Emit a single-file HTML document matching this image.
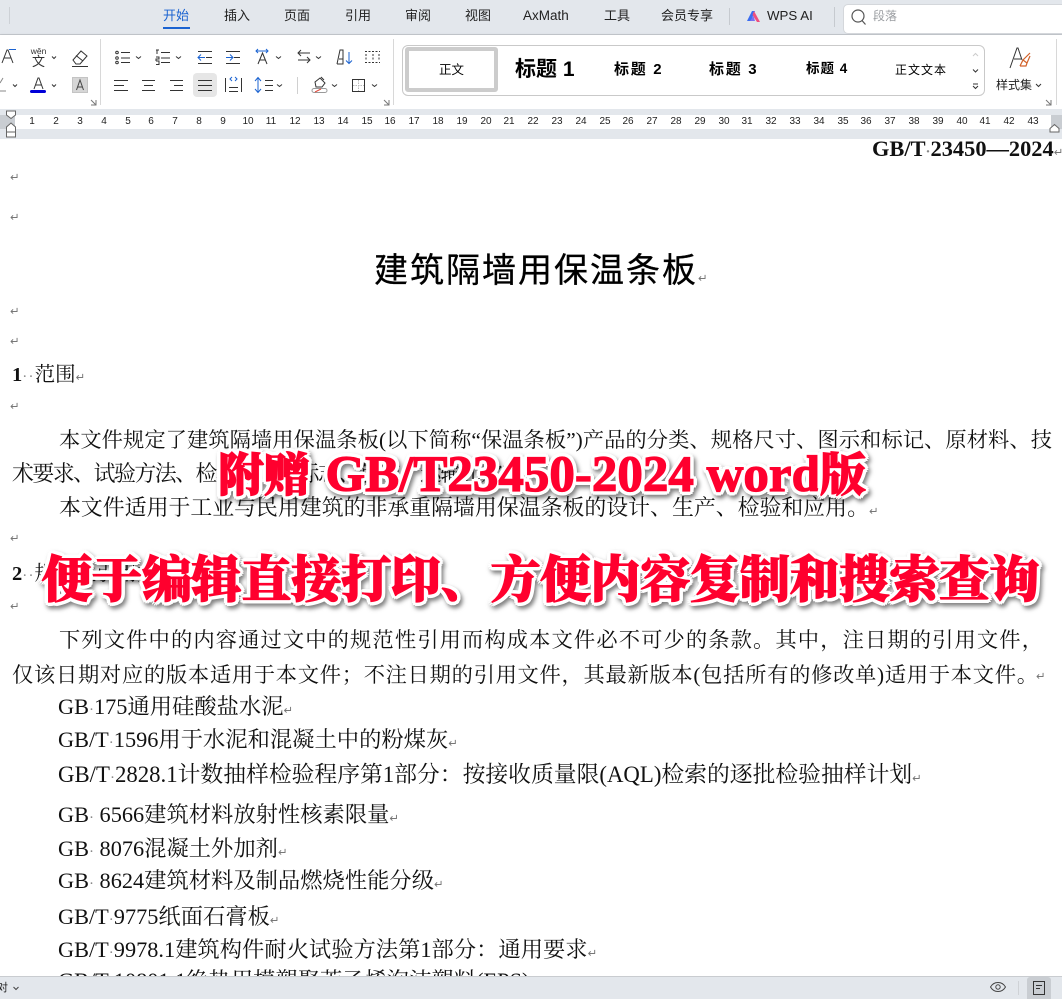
<!DOCTYPE html>
<html lang="zh"><head><meta charset="utf-8"><title>GB/T 23450-2024</title>
<style>
html,body{margin:0;padding:0;background:#fff}
#p{position:relative;width:1062px;height:999px;overflow:hidden;background:#fff;font-family:"Liberation Sans","Noto Sans CJK SC",sans-serif;color:#222}
#p>div,#p>svg{position:absolute}
.t{font-size:12px;line-height:16px;top:8px;color:#222;white-space:nowrap}
.l{font-family:"Liberation Serif","Noto Serif CJK SC",serif;font-size:22.300px;line-height:30px;height:30px;color:#111;white-space:nowrap}
.x{font-size:21.900px}
.y{font-size:21.300px}
.j{text-align:justify;text-align-last:justify;white-space:normal}
.m{font-family:"DejaVu Sans",sans-serif;font-size:11.500px;line-height:12px;color:#777;white-space:nowrap}
.d{color:#888;font-size:15px}
.h{font-size:20.500px}
.h .d{letter-spacing:1.200px}
.n{font-size:10px;line-height:12px;top:116px;width:20px;text-align:center;color:#222}
.s{font-family:"Liberation Sans","Noto Sans CJK SC",sans-serif;color:#000;white-space:nowrap;line-height:20px}
.b{font-family:"Liberation Serif","Noto Serif CJK SC",serif;font-weight:900;color:#ff002e;white-space:nowrap;-webkit-text-stroke:1.200px #ff002e;text-shadow:3px 0 #fff,-3px 0 #fff,0 3px #fff,0 -3px #fff,2px 2px #fff,-2px 2px #fff,2px -2px #fff,-2px -2px #fff,4px 1px #fff,-4px 1px #fff,4px -1px #fff,-4px -1px #fff,1px 4px #fff,-1px 4px #fff,1px -4px #fff,-1px -4px #fff,3px 3px #fff,-3px 3px #fff,3px -3px #fff,-3px -3px #fff;filter:drop-shadow(2px 3px 2px rgba(0,0,0,.5))}
svg{overflow:visible}
</style></head><body><div id="p">

<div style="left:0;top:0;width:1062px;height:34px;background:#e3e7ec"></div>
<div style="left:0;top:34px;width:1062px;height:1px;background:#c8ccd1"></div>
<div style="left:0;top:35px;width:1062px;height:74px;background:#fff;box-shadow:0 1px 3px rgba(0,0,0,.25)"></div>
<div style="left:9px;top:7px;width:1px;height:17px;background:#cdd1d6"></div>

<div class="t" style="left:163px;color:#1b63d1;font-size:13px">开始</div>
<div style="left:163px;top:27px;width:27px;height:2px;background:#1b63d1"></div>
<div class="t" style="left:224px;font-size:13px">插入</div>
<div class="t" style="left:284px;font-size:13px">页面</div>
<div class="t" style="left:345px;font-size:13px">引用</div>
<div class="t" style="left:405px;font-size:13px">审阅</div>
<div class="t" style="left:465px;font-size:13px">视图</div>
<div class="t" style="left:523px;font-size:13.500px">AxMath</div>
<div class="t" style="left:604px;font-size:13px">工具</div>
<div class="t" style="left:661px;font-size:13px">会员专享</div>
<div style="left:729px;top:8px;width:1px;height:17px;background:#c6cacf"></div>
<svg style="left:747px;top:10px" width="14" height="14" viewBox="0 0 14 14"><path d="M0 11 L5 1 H8 L4 11Z" fill="#3b6df0"/><path d="M7 1 L13 12 H10 L5.500 5Z" fill="#ef4f7e"/><path d="M3 11 L6.500 6 L8 11Z" fill="#7a6ff0"/></svg>
<div class="t" style="left:767px;font-size:13.300px">WPS AI</div>
<div style="left:834px;top:7px;width:1px;height:20px;background:#c6cacf"></div>
<div style="left:843px;top:4px;width:230px;height:28px;background:#fff;border:1px solid #d4d7db;border-radius:5px"></div>
<svg style="left:851px;top:8px" width="16" height="18" viewBox="0 0 16 18"><circle cx="7" cy="8" r="6" fill="none" stroke="#555" stroke-width="1.200"/><path d="M11 12.500 L14.500 16.500" stroke="#555" stroke-width="1.200"/></svg>
<div class="t" style="left:873px;top:8px;color:#9a9da1;font-size:12px">段落</div>

<!-- ribbon left -->
<svg style="left:0;top:35px" width="400" height="74" viewBox="0 35 400 74">
<g fill="none" stroke="#333" stroke-width="1">
<path d="M2 63 L7 50 L8 50 L13 63 M4 58 H11"/>
<path d="M9 49.500 H16" stroke="#1b63d1"/>
<path d="M52 56.500 L54 58.500 L56 56.500"/>
<path d="M73 60 L81 51 L87 56 L80 64 H76Z M76 55.500 L83 61 M72 66.500 H88"/>
<circle cx="117" cy="52.500" r="1.300"/><circle cx="117" cy="58" r="1.300"/><circle cx="117" cy="62.500" r="1.300"/>
<path d="M121 52.500 H130 M121 58 H130 M121 62.500 H130"/>
<path d="M136 56.500 L138.500 58.500 L141 56.500"/>
<path d="M156 50 H159 M157 50 V54 M156 57 H159 V59 H156 V61 M156 61 H159 V64.500 H156 M161 52.500 H170 M161 58 H170 M161 62.500 H170"/>
<path d="M176 56.500 L178.500 58.500 L181 56.500"/>
<path d="M198 51.500 H212 M206 57.500 H212 M198 63.500 H212"/>
<path d="M205 57.500 H198 M201 54.500 L198 57.500 L201 60.500" stroke="#1b63d1"/>
<path d="M226 51.500 H240 M234 57.500 H240 M226 63.500 H240" />
<path d="M226 57.500 H233 M230 54.500 L233 57.500 L230 60.500" stroke="#1b63d1"/>
<path d="M258 64 L262.500 53 L267 64 M259.500 60 H265.500"/>
<path d="M256 51 H268 M258 49 L256 51 L258 53 M266 49 L268 51 L266 53" stroke="#1b63d1"/>
<path d="M276 56.500 L278.500 58.500 L281 56.500"/>
<path d="M298 53 H310 M301 50 L298 53 L301 56 M310 60 H298 M307 57 L310 60 L307 63 "/>
<path d="M316 56.500 L318.500 58.500 L321 56.500"/>
<path d="M337 64 L340 50 H343 V64 H337 M339 59 H343"/>
<path d="M349 52 V63 M346 60.500 L349 63.500 L352 60.500" stroke="#1b63d1"/>
<path d="M365 51.500 H380 M365 62.500 H380 M366 54 V60 M379 54 V60 M373 54 V60" stroke-dasharray="2 1.500"/>
<path d="M13 84.500 L15 86.500 L17 84.500"/>
<path d="M52 84.500 L54 86.500 L56 84.500"/>
<path d="M3 78 L0 83 M0 91 H6" stroke="#888"/>
<path d="M34 89 L38 78 L39 78 L43 89 M35.500 85 H41.500"/>
</g>
<rect x="30" y="90" width="16" height="3" rx="1.500" fill="#0000d8"/>
<rect x="72.500" y="77.500" width="15" height="15" fill="#d6d6d6" stroke="#c4c4c4"/>
<path d="M76.500 90 L80 80 L83.500 90 M77.500 87 H82.500" fill="none" stroke="#444"/>
<g fill="none" stroke="#333" stroke-width="1">
<path d="M114 80.500 H128 M114 85.500 H124 M114 90.500 H128"/>
<path d="M142 80.500 H155 M144 85.500 H153 M142 90.500 H155"/>
<path d="M170 80.500 H183 M174 85.500 H183 M170 90.500 H183"/>
<path d="M225.500 78 V92 M241.500 78 V92 M229 87.500 H238 M229 91.500 H238"/>
<path d="M232 81 L230 79 L232 77 M235 77 L237 79 L235 81" stroke="#1b63d1"/>
<path d="M258 78 V92 M255 81 L258 77.500 L261 81 M255 89 L258 92.500 L261 89" stroke="#1b63d1"/>
<path d="M265 80.500 H273 M265 85.500 H273 M265 90.500 H273"/>
<path d="M277 84.500 L279.500 86.500 L282 84.500"/>
<path d="M297.500 77 V94" stroke="#d0d0d0"/>
<path d="M315 82 L320 78 L325 83 L322 87 H316Z M321 77 L324 80"/>
<rect x="312" y="88.500" width="15" height="4" rx="2" stroke="#999"/>
<path d="M315 92 L321 89" stroke="#e0483a"/>
<path d="M332 84.500 L334.500 86.500 L337 84.500"/>
<rect x="352.500" y="79.500" width="12" height="12"/>
<path d="M358.500 80 V91 M353 85.500 H364" stroke="#bbb" stroke-dasharray="1.500 1"/>
<path d="M372 84.500 L374.500 86.500 L377 84.500"/>
<path d="M91 100 L96 105 M96 100 V105 H91" stroke="#777"/>
<path d="M384 100 L389 105 M389 100 V105 H384" stroke="#777"/>
</g>
</svg>
<div style="left:30px;top:47px;font-size:8.500px;line-height:9px;width:17px;text-align:center;color:#333">wěn</div>
<div style="left:30px;top:55px;font-size:13px;line-height:13px;width:17px;text-align:center;color:#333">文</div>
<div style="left:193px;top:73px;width:24px;height:24px;background:#e6e6e6;border-radius:4px"></div>
<svg style="left:198px;top:80px" width="14" height="11" viewBox="0 0 14 11"><path d="M0 .5 H14 M0 5.500 H14 M0 10.500 H14" stroke="#333" fill="none"/></svg>
<div style="left:100px;top:39px;width:1px;height:66px;background:#d8d8d8"></div>
<div style="left:393px;top:39px;width:1px;height:66px;background:#d8d8d8"></div>

<!-- styles -->
<div style="left:402px;top:45px;width:581px;height:49px;border:1px solid #c9c9c9;border-radius:6px"></div>
<div style="left:405px;top:47px;width:85px;height:37px;border:4px solid #cccccc;border-radius:3px;background:#fff"></div>
<div class="s" style="left:439px;top:60px;font-size:12.500px">正文</div>
<div class="s" style="left:515px;top:60px;font-size:21px;font-weight:700">标题 1</div>
<div class="s" style="left:614px;top:60px;font-size:15px;font-weight:700;letter-spacing:1.700px">标题 2</div>
<div class="s" style="left:709px;top:60px;font-size:15px;font-weight:700;letter-spacing:1.700px">标题 3</div>
<div class="s" style="left:806px;top:59px;font-size:13.500px;font-weight:700;letter-spacing:1px">标题 4</div>
<div class="s" style="left:895px;top:60px;font-size:12px;letter-spacing:1px">正文文本</div>
<svg style="left:970px;top:50px" width="12" height="42" viewBox="0 0 12 42"><path d="M3 6 L5.500 3.500 L8 6" fill="none" stroke="#ccc"/><path d="M3 19.500 L5.500 22 L8 19.500" fill="none" stroke="#333"/><path d="M3 34 H8 M3 36 L5.500 38.500 L8 36" fill="none" stroke="#333"/></svg>
<svg style="left:1008px;top:46px" width="24" height="24" viewBox="0 0 24 24"><path d="M2 22 L9 2 L10 2 L14 14 M6 13 H13" fill="none" stroke="#333"/><path d="M12 20 L15 14 L22 7 M15 14 L19 17 L22 10 M12 20 H18 L19 17" fill="none" stroke="#d2622a" stroke-width="1.200"/></svg>
<div class="t" style="left:996px;top:77px;font-size:12px">样式集</div>
<svg style="left:1035px;top:83px" width="7" height="5" viewBox="0 0 7 5"><path d="M1 1 L3.500 3.500 L6 1" fill="none" stroke="#333"/></svg>
<svg style="left:1045px;top:99px" width="7" height="7" viewBox="0 0 7 7"><path d="M1 1 L6 6 M6 1 V6 H1" fill="none" stroke="#777"/></svg>
<div style="left:1056px;top:39px;width:1px;height:66px;background:#d8d8d8"></div>

<!-- ruler -->
<div style="left:0;top:109px;width:1062px;height:30px;background:#e3e7ec"></div>
<div style="left:0;top:115px;width:1062px;height:14px;background:#fff"></div>
<div style="left:0;top:115px;width:15px;height:14px;background:#c9cdd2"></div>
<div style="left:1051px;top:115px;width:11px;height:14px;background:#c9cdd2"></div>
<svg style="left:5px;top:109px" width="13" height="30" viewBox="0 0 13 30"><path d="M1.500 2 H10.500 V6 L6 9.500 L1.500 6Z M1.500 23 V18 L6 14 L10.500 18 V23Z M1.500 23 H10.500 V28 H1.500Z" fill="#fff" stroke="#666"/></svg>
<svg style="left:1049px;top:124px" width="12" height="9" viewBox="0 0 12 9"><path d="M1 8 V4.500 L5.500 .5 L10 4.500 V8Z" fill="#fff" stroke="#666"/></svg>
<div class="n" style="left:22px">1</div><div class="n" style="left:46px">2</div><div class="n" style="left:70px">3</div><div class="n" style="left:94px">4</div><div class="n" style="left:118px">5</div><div class="n" style="left:141px">6</div><div class="n" style="left:165px">7</div><div class="n" style="left:189px">8</div><div class="n" style="left:213px">9</div><div class="n" style="left:238px">10</div><div class="n" style="left:261px">11</div><div class="n" style="left:285px">12</div><div class="n" style="left:309px">13</div><div class="n" style="left:333px">14</div><div class="n" style="left:357px">15</div><div class="n" style="left:380px">16</div><div class="n" style="left:404px">17</div><div class="n" style="left:428px">18</div><div class="n" style="left:452px">19</div><div class="n" style="left:476px">20</div><div class="n" style="left:499px">21</div><div class="n" style="left:523px">22</div><div class="n" style="left:547px">23</div><div class="n" style="left:571px">24</div><div class="n" style="left:595px">25</div><div class="n" style="left:618px">26</div><div class="n" style="left:642px">27</div><div class="n" style="left:666px">28</div><div class="n" style="left:690px">29</div><div class="n" style="left:714px">30</div><div class="n" style="left:737px">31</div><div class="n" style="left:761px">32</div><div class="n" style="left:785px">33</div><div class="n" style="left:809px">34</div><div class="n" style="left:833px">35</div><div class="n" style="left:856px">36</div><div class="n" style="left:880px">37</div><div class="n" style="left:904px">38</div><div class="n" style="left:928px">39</div><div class="n" style="left:952px">40</div><div class="n" style="left:975px">41</div><div class="n" style="left:999px">42</div><div class="n" style="left:1023px">43</div>

<!-- document -->
<div class="l" style="left:872px;top:134px;font-weight:700;font-size:22.400px">GB/T<span class="d">·</span>23450—2024<span class="m" style="font-weight:400">↵</span></div>
<div class="m" style="left:10px;top:171px">↵</div>
<div class="m" style="left:10px;top:211px">↵</div>
<div style="left:374px;top:248px;font-family:'Liberation Sans','Noto Sans CJK SC',sans-serif;font-size:34px;line-height:46px;letter-spacing:2px;color:#000;white-space:nowrap;-webkit-text-stroke:.3px #000">建筑隔墙用保温条板<span class="m" style="letter-spacing:0;-webkit-text-stroke:0">↵</span></div>
<div class="m" style="left:10px;top:305px">↵</div>
<div class="m" style="left:10px;top:335px">↵</div>
<div class="l h" style="left:12px;top:360px"><b>1</b><span class="d">··</span>范围<span class="m">↵</span></div>
<div class="m" style="left:10px;top:400px">↵</div>

<div class="l j y" style="left:59px;top:425px;width:993px">本文件规定了建筑隔墙用保温条板(以下简称“保温条板”)产品的分类、规格尺寸、图示和标记、原材料、技</div>
<div class="l x" style="left:12px;top:459px;letter-spacing:-1.500px">术要求、试验方法、检验规则、标志、包装、运输和贮存。</div>
<div class="l x" style="left:59px;top:493px">本文件适用于工业与民用建筑的非承重隔墙用保温条板的设计、生产、检验和应用。<span class="m">↵</span></div>
<div class="m" style="left:10px;top:532px">↵</div>
<div class="l h" style="left:12px;top:559px"><b>2</b><span class="d">··</span>规范性引用文件<span class="m">↵</span></div>
<div class="m" style="left:10px;top:600px">↵</div>
<div class="l j y" style="left:59px;top:625px;width:984px">下列文件中的内容通过文中的规范性引用而构成本文件必不可少的条款。其中，注日期的引用文件，</div>
<div class="l j y" style="left:12px;top:660px;width:1026px">仅该日期对应的版本适用于本文件；不注日期的引用文件，其最新版本(包括所有的修改单)适用于本文件。</div>
<div class="m" style="left:1036px;top:670px">↵</div>
<div class="l" style="left:58px;top:692px">GB<span class="d">·</span>175通用硅酸盐水泥<span class="m">↵</span></div>
<div class="l" style="left:58px;top:725px">GB/T<span class="d">·</span>1596用于水泥和混凝土中的粉煤灰<span class="m">↵</span></div>
<div class="l" style="left:58px;top:760px;font-size:22.800px">GB/T<span class="d">·</span>2828.1计数抽样检验程序第1部分：按接收质量限(AQL)检索的逐批检验抽样计划<span class="m">↵</span></div>
<div class="l" style="left:58px;top:800px">GB<span class="d">·</span> 6566建筑材料放射性核素限量<span class="m">↵</span></div>
<div class="l" style="left:58px;top:834px">GB<span class="d">·</span> 8076混凝土外加剂<span class="m">↵</span></div>
<div class="l" style="left:58px;top:866px">GB<span class="d">·</span> 8624建筑材料及制品燃烧性能分级<span class="m">↵</span></div>
<div class="l" style="left:58px;top:902px">GB/T<span class="d">·</span>9775纸面石膏板<span class="m">↵</span></div>
<div class="l" style="left:58px;top:935px">GB/T<span class="d">·</span>9978.1建筑构件耐火试验方法第1部分：通用要求<span class="m">↵</span></div>
<div class="l" style="left:58px;top:966px">GB/T<span class="d">·</span>10801.1绝热用模塑聚苯乙烯泡沫塑料(EPS)</div>

<!-- banners -->
<div class="b" style="left:218px;top:445px;font-size:46px;line-height:60px">附赠 <span style="font-size:51px;margin-left:4px">GB/T23450-2024 word</span>版</div>
<div class="b" style="left:42px;top:549px;font-size:50px;line-height:62px;letter-spacing:-.15px">便于编辑直接打印、方便内容复制和搜索查询</div>

<!-- status -->
<div style="left:0;top:976px;width:1062px;height:23px;background:#e3e7ec;border-top:1px solid #c9ccd0;box-sizing:border-box"></div>
<div class="t" style="left:-3px;top:980px;font-size:11px">对</div>
<svg style="left:13px;top:986px" width="6" height="5" viewBox="0 0 6 5"><path d="M.5 1 L3 3.500 L5.500 1" fill="none" stroke="#444"/></svg>
<svg style="left:990px;top:981px" width="16" height="12" viewBox="0 0 16 12"><path d="M.5 6 C4 0 12 0 15.500 6 C12 12 4 12 .5 6Z" fill="none" stroke="#444"/><circle cx="8" cy="6" r="2.200" fill="none" stroke="#444"/></svg>
<div style="left:1018px;top:981px;width:1px;height:14px;background:#cfd2d6"></div>
<div style="left:1027px;top:977px;width:24px;height:22px;background:#c9cdd2;border-radius:3px 3px 0 0"></div>
<svg style="left:1033px;top:981px" width="12" height="14" viewBox="0 0 12 14"><path d="M.5 .5 H11.500 V13.500 H.5Z M3 4.500 H9 M3 7.500 H7" fill="none" stroke="#333"/></svg>
</div></body></html>
